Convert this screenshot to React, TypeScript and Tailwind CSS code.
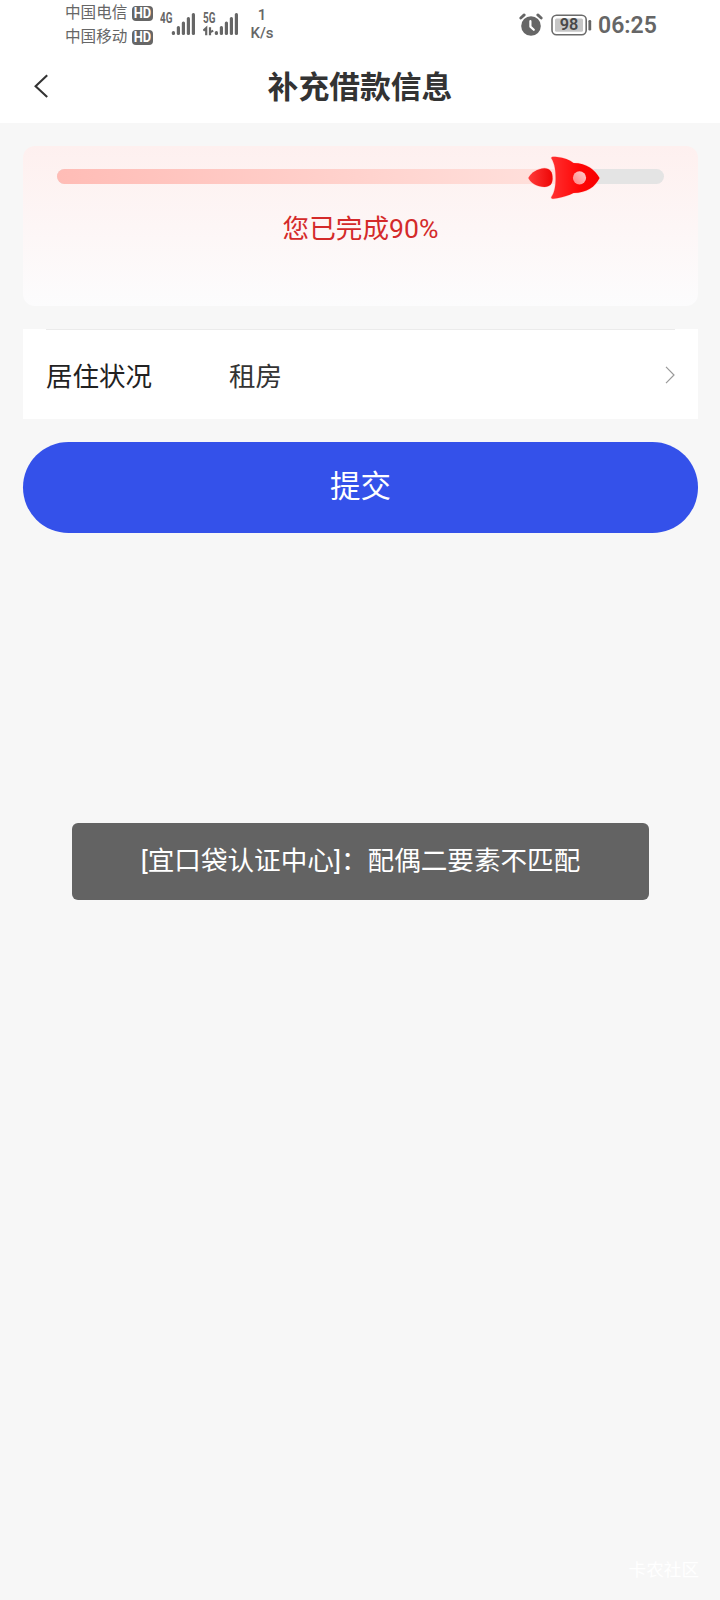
import { ReactNode } from 'react';

interface SignalProps {
  label: string;
  children?: ReactNode;
}

const signalBars = [31, 26, 21.5, 17, 13];

function HdBadge() {
  return (
    <svg className="h-[23px] w-[23px]" viewBox="0 0 23 23">
      <rect x="1" y="4" width="21" height="15" rx="4" fill="#666" />
      <text
        x="2.8"
        y="16.4"
        textLength="17.4"
        lengthAdjust="spacingAndGlyphs"
        fontFamily="Roboto, sans-serif"
        fontSize="14"
        fontWeight="700"
        fill="#fff"
      >
        HD
      </text>
    </svg>
  );
}

function Carrier({ name }: { name: string }) {
  return (
    <div className="flex h-6 items-center gap-[3px]">
      <span className="w-[63px] whitespace-nowrap text-[15.6px] leading-6 text-[#666]">{name}</span>
      <HdBadge />
    </div>
  );
}

function Signal({ label, children }: SignalProps) {
  return (
    <svg className="h-[50px] w-[36px]" viewBox="0 0 36 50" fill="#666">
      <text
        x="0"
        y="23"
        textLength="12.4"
        lengthAdjust="spacingAndGlyphs"
        fontFamily="Roboto, sans-serif"
        fontSize="14"
        fontWeight="700"
      >
        {label}
      </text>
      {children}
      {signalBars.map((top, i) => (
        <rect key={top} x={11.8 + i * 5} y={top} width="3.2" height={35 - top} rx="1.5" />
      ))}
    </svg>
  );
}

function AlarmIcon() {
  return (
    <svg className="h-[23px] w-[24px]" viewBox="0 0 24 23" fill="none">
      <circle cx="12" cy="13" r="9.8" fill="#666" />
      <path d="M1.8 5 5.2 1.9M22.2 5 18.8 1.9" stroke="#666" strokeWidth="2.8" strokeLinecap="round" />
      <path d="M11.4 8.2v5.4l3.4 3.2" stroke="#fff" strokeWidth="2.2" strokeLinecap="round" strokeLinejoin="round" />
    </svg>
  );
}

function BatteryIcon({ level }: { level: number }) {
  return (
    <svg className="h-[22px] w-[41px]" viewBox="0 0 41 22">
      <rect x="1" y="1.2" width="34.2" height="19.6" rx="4.5" fill="none" stroke="#6b6b6b" strokeWidth="1.6" />
      <rect x="4" y="4.4" width="28" height="13.4" rx="1.5" fill="#c6c6c6" />
      <rect x="37.4" y="6" width="2.8" height="10.4" rx="1.2" fill="#666" />
      <text
        x="18"
        y="16.4"
        textAnchor="middle"
        textLength="18.6"
        lengthAdjust="spacingAndGlyphs"
        fontFamily="Roboto, sans-serif"
        fontSize="16"
        fontWeight="600"
        fill="#484848"
      >
        {level}
      </text>
    </svg>
  );
}

function StatusBar() {
  return (
    <div className="flex h-[50px] items-start bg-white pl-[65px] pr-[64px] text-[#666]">
      <div className="pt-px">
        <Carrier name="中国电信" />
        <Carrier name="中国移动" />
      </div>
      <div className="ml-[6px] flex gap-[7px]">
        <Signal label="4G" />
        <Signal label="5G">
          <path
            d="M0.4 30.6 3.2 28V35.2M7 27.2V35.2M7 32.4 10.2 30.6"
            stroke="#666"
            strokeWidth="2.2"
            fill="none"
          />
        </Signal>
      </div>
      <div className="ml-[10px] w-[26px] pt-[6px] text-center font-[Roboto,sans-serif] text-[15px] font-medium leading-[18px]">
        <p>1</p>
        <p>K/s</p>
      </div>
      <div className="ml-auto flex h-[50px] items-center">
        <div className="pb-[2px]">
          <AlarmIcon />
        </div>
        <div className="ml-[8px] pb-px">
          <BatteryIcon level={98} />
        </div>
        <span className="ml-[6px] w-[58px] whitespace-nowrap pt-[2px] font-[Roboto,sans-serif] text-[23px] font-semibold leading-[48px]">
          06:25
        </span>
      </div>
    </div>
  );
}

function Header() {
  return (
    <header className="grid h-[73px] grid-cols-[72px_1fr_72px] items-center bg-white">
      <button className="flex justify-center pb-[2px] pl-[9px]" aria-label="返回">
        <svg className="h-6 w-4" viewBox="0 0 16 24" fill="none" stroke="#333" strokeWidth="2.1">
          <path d="M14.2 1.2 2.6 12.2 14.2 23" />
        </svg>
      </button>
      <h1 className="pt-[2px] text-center text-[30.8px] font-bold leading-[71px] text-[#333]">补充借款信息</h1>
    </header>
  );
}

function Rocket() {
  return (
    <svg className="h-[46px] w-[76px]" viewBox="0 0 76 46">
      <defs>
        <linearGradient id="flame" x1="0" x2="1">
          <stop offset="0" stopColor="#ff3b3b" />
          <stop offset="1" stopColor="#ee0505" />
        </linearGradient>
        <linearGradient id="body" x1="0" x2="1">
          <stop offset="0" stopColor="#ff3030" />
          <stop offset="0.6" stopColor="#ff0505" />
          <stop offset="1" stopColor="#f60000" />
        </linearGradient>
        <linearGradient id="glass" x1="0" y1="1" x2="1" y2="0">
          <stop offset="0" stopColor="#ff8585" />
          <stop offset="1" stopColor="#ffd0d0" />
        </linearGradient>
      </defs>
      <g stroke="#ffd3d0" strokeWidth="1.2" paintOrder="stroke">
        <path
          d="M2.3 24C5 18.5 11.5 14.5 18.5 14.2 24 14.3 26.6 18 26.6 24S24 32.8 18.5 32.9C11.5 32.6 5 29.5 2.3 24Z"
          fill="url(#flame)"
        />
        <path
          d="M25.2 4C25.5 2.2 28 2.6 31 3 38 3.8 43.5 5.6 47.5 9 61 9.2 69 16 73.6 24 69 33 61 38.8 47.5 39 43 41.3 37.5 43.2 31 44.2 28 44.8 25 45.1 25.2 43.2 28.8 38.5 29.6 31 29.6 24S29 10 25.2 4Z"
          fill="url(#body)"
        />
      </g>
      <circle cx="53.5" cy="23.8" r="6.6" fill="url(#glass)" />
    </svg>
  );
}

function ProgressCard() {
  const percent = 90;

  return (
    <section className="h-[160px] rounded-[12px] bg-gradient-to-b from-[#fef0ef] to-[#fcfcfd] px-[34px] pt-[23px]">
      <div className="relative h-[15px] rounded-full bg-[#e4e4e4]">
        <div className="h-[15px] w-[520px] rounded-full bg-gradient-to-r from-[#ffbcb6] to-[#ffe2de]" />
        <div className="absolute -top-[15px] left-[469px]">
          <Rocket />
        </div>
      </div>
      <p className="mt-[25px] text-center text-[26.6px] leading-[40px] text-[#d42a2a]">您已完成{percent}%</p>
    </section>
  );
}

export default function App() {
  return (
    <div className="relative h-[1600px] w-[720px] overflow-hidden bg-[#f7f7f7] font-[Roboto,'Noto_Sans_CJK_SC',sans-serif]">
      <StatusBar />
      <Header />

      <main className="pl-[23px] pr-[22px] pt-[23px]">
        <ProgressCard />

        {/* Form row */}
        <div className="mt-[23px] h-[90px] bg-white px-[23px]">
          <div className="flex h-full items-center border-t border-[#ebebeb] text-[26.5px] leading-[40px]">
            <span className="w-[183px] pt-[4px] text-[#222]">居住状况</span>
            <span className="flex-1 pt-[4px] text-[#333]">租房</span>
            <svg className="h-[18px] w-[10px]" viewBox="0 0 10 18" fill="none" stroke="#999" strokeWidth="1.2">
              <path d="M1 0.8 9 9 1 17.2" />
            </svg>
          </div>
        </div>

        <button className="mt-[23px] block h-[91px] w-full rounded-full bg-[#3451ea] pb-[2px] text-[30.5px] text-white">
          提交
        </button>
      </main>

      {/* Toast */}
      <div className="absolute left-[72px] top-[823px] flex h-[77px] w-[577px] items-center justify-center rounded-[6px] bg-[#636363] pb-[2px] text-[26.6px] leading-[40px] text-white">
        [宜口袋认证中心]：配偶二要素不匹配
      </div>

      <span className="absolute bottom-[16px] right-[21px] text-[17.6px] leading-[28px] text-white">卡农社区</span>
    </div>
  );
}
